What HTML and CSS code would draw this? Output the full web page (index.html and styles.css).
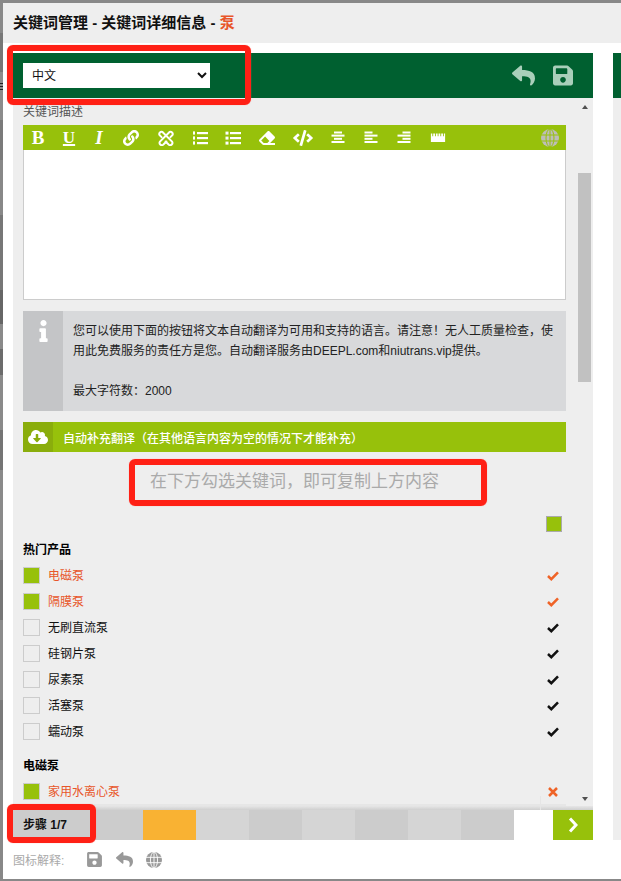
FILE: index.html
```html
<!DOCTYPE html>
<html lang="zh">
<head>
<meta charset="utf-8">
<title>关键词管理</title>
<link rel="stylesheet" href="styles.css">
</head>
<body>
<div class="dialog">
  <div class="title">关键词管理 - 关键词详细信息 - <span class="title-key">泵</span></div>
  <div class="panels">
    <section class="panel">
      <header class="head">
        <select class="lang"><option>中文</option></select>
        <div class="head-actions">
          <svg class="ic-undo" viewBox="0 0 512 512"><path d="M8.309 189.836L184.313 37.851C199.719 24.546 224 35.347 224 56.015v80.053c160.629 1.839 288 34.032 288 186.258 0 61.441-39.581 122.309-83.333 154.132-13.653 9.931-33.111-2.533-28.077-18.631 45.344-145.012-21.507-183.51-176.59-185.742V360c0 20.7-24.3 31.453-39.687 18.164l-176.004-152c-11.071-9.562-11.086-26.753 0-36.328z"/></svg>
          <svg class="ic-save" viewBox="0 0 448 512"><path d="M433.941 129.941l-83.882-83.882A48 48 0 0 0 316.118 32H48C21.49 32 0 53.49 0 80v352c0 26.51 21.49 48 48 48h352c26.51 0 48-21.49 48-48V163.882a48 48 0 0 0-14.059-33.941zM224 416c-35.346 0-64-28.654-64-64 0-35.346 28.654-64 64-64s64 28.654 64 64c0 35.346-28.654 64-64 64zm96-304.52V212c0 6.627-5.373 12-12 12H76c-6.627 0-12-5.373-12-12V108c0-6.627 5.373-12 12-12h228.52c3.183 0 6.235 1.264 8.485 3.515l3.48 3.48A11.996 11.996 0 0 1 320 111.48z"/></svg>
        </div>
      </header>
      <div class="body">
        <div class="scroll-row">
          <div class="scroll">
            <div class="field-label">关键词描述</div>
            <div class="toolbar">
              <span class="tb w14 glyph">B</span>
              <span class="tb w14 glyph under">U</span>
              <span class="tb w12 glyph ital">I</span>
              <svg class="tb w18" viewBox="0 0 512 512"><path d="M326.612 185.391c59.747 59.809 58.927 155.698.36 214.59-.11.12-.24.25-.36.37l-67.2 67.2c-59.27 59.27-155.699 59.262-214.96 0-59.27-59.26-59.27-155.7 0-214.96l37.106-37.106c9.84-9.84 26.786-3.3 27.294 10.606.648 17.722 3.826 35.527 9.69 52.721 1.986 5.822.567 12.262-3.783 16.612l-13.087 13.087c-28.026 28.026-28.905 73.66-1.155 101.96 28.024 28.579 74.086 28.749 102.325.51l67.2-67.19c28.191-28.191 28.073-73.757 0-101.83-3.701-3.694-7.429-6.564-10.341-8.569a16.037 16.037 0 0 1-6.947-12.606c-.396-10.567 3.348-21.456 11.698-29.806l21.054-21.055c5.521-5.521 14.182-6.199 20.584-1.731a152.482 152.482 0 0 1 20.522 17.197zM467.547 44.449c-59.261-59.262-155.69-59.27-214.96 0l-67.2 67.2c-.12.12-.25.25-.36.37-58.566 58.892-59.387 154.781.36 214.59a152.454 152.454 0 0 0 20.521 17.196c6.402 4.468 15.064 3.789 20.584-1.731l21.054-21.055c8.35-8.35 12.094-19.239 11.698-29.806a16.037 16.037 0 0 0-6.947-12.606c-2.912-2.005-6.64-4.875-10.341-8.569-28.073-28.073-28.191-73.639 0-101.83l67.2-67.19c28.239-28.239 74.3-28.069 102.325.51 27.75 28.3 26.872 73.934-1.155 101.96l-13.087 13.087c-4.35 4.35-5.769 10.79-3.783 16.612 5.864 17.194 9.042 34.999 9.69 52.721.509 13.906 17.454 20.446 27.294 10.606l37.106-37.106c59.271-59.259 59.271-155.699.001-214.959z"/></svg>
              <svg class="tb w18 stroke-ic" viewBox="0 0 18 18"><path d="M5 2.200 15.800 13a2.600 2.600 0 0 1-3.600 3.600L8.500 13M13 2.200 2.200 13a2.600 2.600 0 0 0 3.600 3.600L9.500 13M5 2.200A2.600 2.600 0 0 0 1.600 5.600L4 8M13 2.200a2.600 2.600 0 0 1 3.400 3.400L14 8"/></svg>
              <svg class="tb w16" viewBox="0 0 16 16"><rect x="5" y="2" width="11" height="2.200"/><rect x="5" y="7" width="11" height="2.200"/><rect x="5" y="12" width="11" height="2.200"/><rect x="1" y="1.400" width="2" height="3.200"/><rect x="1" y="6.400" width="2" height="3.200"/><rect x="1" y="11.400" width="2" height="3.200"/></svg>
              <svg class="tb w16" viewBox="0 0 16 16"><rect x="5" y="2" width="11" height="2.200"/><rect x="5" y="7" width="11" height="2.200"/><rect x="5" y="12" width="11" height="2.200"/><rect x="0.500" y="1.600" width="3" height="3"/><rect x="0.500" y="6.600" width="3" height="3"/><rect x="0.500" y="11.600" width="3" height="3"/></svg>
              <svg class="tb w18" viewBox="0 0 512 512"><path d="M497.941 273.941c18.745-18.745 18.745-49.137 0-67.882l-160-160c-18.745-18.745-49.136-18.746-67.883 0l-256 256c-18.745 18.745-18.745 49.137 0 67.882l96 96A48.004 48.004 0 0 0 144 480h356c6.627 0 12-5.373 12-12v-40c0-6.627-5.373-12-12-12H355.883l142.058-142.059zm-302.627-62.627l137.373 137.373L265.373 416H150.628l-80-80 124.686-124.686z"/></svg>
              <svg class="tb w20" viewBox="0 0 640 512"><path d="M278.9 511.5l-61-17.7c-6.4-1.8-10-8.5-8.2-14.9L346.2 8.7c1.8-6.4 8.5-10 14.9-8.2l61 17.7c6.4 1.8 10 8.5 8.2 14.9L293.8 503.3c-1.9 6.4-8.5 10.1-14.9 8.2zm-114-112.2l43.5-46.4c4.6-4.9 4.3-12.7-.8-17.2L117 256l90.6-79.7c5.1-4.5 5.5-12.3.8-17.2l-43.5-46.4c-4.5-4.8-12.1-5.1-17-.5L3.8 247.2c-5.1 4.7-5.1 12.8 0 17.5l144.1 135.1c4.9 4.6 12.5 4.4 17-.5zm327.2.6l144.1-135.1c5.1-4.7 5.1-12.8 0-17.5L492.1 112.1c-4.8-4.5-12.4-4.3-17 .5L431.6 159c-4.6 4.9-4.3 12.7.8 17.2L523 256l-90.6 79.7c-5.1 4.5-5.5 12.3-.8 17.2l43.5 46.4c4.5 4.9 12.1 5.1 17 .6z"/></svg>
              <svg class="tb w14box" viewBox="0 0 14 14"><rect x="3" y="0.500" width="8" height="2"/><rect x="0.500" y="3.600" width="13" height="2"/><rect x="3" y="6.800" width="8" height="2"/><rect x="0.500" y="10" width="13" height="2"/></svg>
              <svg class="tb w14box" viewBox="0 0 14 14"><rect x="0.500" y="0.500" width="8" height="2"/><rect x="0.500" y="3.600" width="13" height="2"/><rect x="0.500" y="6.800" width="8" height="2"/><rect x="0.500" y="10" width="13" height="2"/></svg>
              <svg class="tb w14box" viewBox="0 0 14 14"><rect x="5.500" y="0.500" width="8" height="2"/><rect x="0.500" y="3.600" width="13" height="2"/><rect x="5.500" y="6.800" width="8" height="2"/><rect x="0.500" y="10" width="13" height="2"/></svg>
              <svg class="tb w18" viewBox="0 0 18 18"><path d="M1 4h1.600v3h1V4h2v3h1V4h2v3h1V4h2v3h1V4h2v3h1V4H17v9.500H1z"/></svg>
              <svg class="tb globe-tool" viewBox="0 0 18 18"><circle class="globe-fill" cx="9" cy="9" r="9"/><g class="globe-lines"><ellipse cx="9" cy="9" rx="4" ry="9"/><path d="M0 6h18M0 12h18M9 0v18"/></g></svg>
            </div>
            <div class="editor"></div>
            <div class="info">
              <div class="info-icon">
                <svg viewBox="0 0 192 512"><path d="M20 424.229h20V279.771H20c-11.046 0-20-8.954-20-20V212c0-11.046 8.954-20 20-20h112c11.046 0 20 8.954 20 20v212.229h20c11.046 0 20 8.954 20 20V492c0 11.046-8.954 20-20 20H20c-11.046 0-20-8.954-20-20v-47.771c0-11.046 8.954-20 20-20zM96 0C56.235 0 24 32.235 24 72s32.235 72 72 72 72-32.235 72-72S135.764 0 96 0z"/></svg>
              </div>
              <p class="info-text">您可以使用下面的按钮将文本自动翻译为可用和支持的语言。请注意！无人工质量检查，使用此免费服务的责任方是您。自动翻译服务由DEEPL.com和niutrans.vip提供。<br><br>最大字符数：2000</p>
            </div>
            <div class="autofill">
              <span class="autofill-icon">
                <svg viewBox="0 0 640 512"><path d="M537.6 226.6c4.1-10.7 6.4-22.4 6.4-34.6 0-53-43-96-96-96-19.7 0-38.1 6-53.3 16.2C367 64.2 315.3 32 256 32c-88.4 0-160 71.6-160 160 0 2.7.1 5.4.2 8.1C40.2 219.8 0 273.2 0 336c0 79.5 64.5 144 144 144h368c70.7 0 128-57.3 128-128 0-61.9-44-113.6-102.4-125.4zm-132.9 88.7L299.3 420.7c-6.2 6.2-16.4 6.2-22.6 0L171.3 315.3c-10.1-10.1-2.9-27.3 11.3-27.3H248V176c0-8.8 7.2-16 16-16h48c8.8 0 16 7.2 16 16v112h65.4c14.2 0 21.4 17.2 11.3 27.3z"/></svg>
              </span>
              <span class="autofill-text">自动补充翻译（在其他语言内容为空的情况下才能补充）</span>
            </div>
            <div class="hint">在下方勾选关键词，即可复制上方内容</div>
            <div class="select-all"><span class="box-all"></span></div>

            <h3 class="group">热门产品</h3>
            <div class="rows">
              <div class="row on"><span class="box"></span><span class="name">电磁泵</span><svg class="mark" viewBox="0 0 12 10"><path d="M1 5 4.300 8.200 11 1.300"/></svg></div>
              <div class="row on"><span class="box"></span><span class="name">隔膜泵</span><svg class="mark" viewBox="0 0 12 10"><path d="M1 5 4.300 8.200 11 1.300"/></svg></div>
              <div class="row"><span class="box"></span><span class="name">无刷直流泵</span><svg class="mark" viewBox="0 0 12 10"><path d="M1 5 4.300 8.200 11 1.300"/></svg></div>
              <div class="row"><span class="box"></span><span class="name">硅钢片泵</span><svg class="mark" viewBox="0 0 12 10"><path d="M1 5 4.300 8.200 11 1.300"/></svg></div>
              <div class="row"><span class="box"></span><span class="name">尿素泵</span><svg class="mark" viewBox="0 0 12 10"><path d="M1 5 4.300 8.200 11 1.300"/></svg></div>
              <div class="row"><span class="box"></span><span class="name">活塞泵</span><svg class="mark" viewBox="0 0 12 10"><path d="M1 5 4.300 8.200 11 1.300"/></svg></div>
              <div class="row"><span class="box"></span><span class="name">蠕动泵</span><svg class="mark" viewBox="0 0 12 10"><path d="M1 5 4.300 8.200 11 1.300"/></svg></div>
            </div>
            <h3 class="group group-next">电磁泵</h3>
            <div class="rows">
              <div class="row on"><span class="box"></span><span class="name">家用水离心泵</span><svg class="mark cross" viewBox="0 0 12 10"><path d="M2 1 10 9M10 1 2 9"/></svg></div>
            </div>
          </div>
          <div class="scrollbar">
            <span class="arrow-up"></span>
            <span class="thumb"></span>
            <span class="arrow-down"></span>
          </div>
        </div>
        <div class="body-foot"></div>
      </div>
      <div class="steps">
        <div class="step-label">步骤 1/7</div>
        <div class="step dark"></div>
        <div class="step current"></div>
        <div class="step light"></div>
        <div class="step dark"></div>
        <div class="step light"></div>
        <div class="step dark"></div>
        <div class="step light"></div>
        <div class="step dark"></div>
        <div class="step-gap"></div>
        <div class="step-next">
          <svg viewBox="0 0 10 16"><path d="M2 1.500 8 8 2 14.500"/></svg>
        </div>
      </div>
    </section>
    <section class="panel-next">
      <div class="head-next"></div>
      <div class="body-next"></div>
    </section>
  </div>
  <footer class="legend">
    <span class="legend-label">图标解释:</span>
    <svg class="lg-save" viewBox="0 0 448 512"><path d="M433.941 129.941l-83.882-83.882A48 48 0 0 0 316.118 32H48C21.49 32 0 53.49 0 80v352c0 26.51 21.49 48 48 48h352c26.51 0 48-21.49 48-48V163.882a48 48 0 0 0-14.059-33.941zM224 416c-35.346 0-64-28.654-64-64 0-35.346 28.654-64 64-64s64 28.654 64 64c0 35.346-28.654 64-64 64zm96-304.52V212c0 6.627-5.373 12-12 12H76c-6.627 0-12-5.373-12-12V108c0-6.627 5.373-12 12-12h228.52c3.183 0 6.235 1.264 8.485 3.515l3.48 3.48A11.996 11.996 0 0 1 320 111.48z"/></svg>
    <svg class="lg-undo" viewBox="0 0 512 512"><path d="M8.309 189.836L184.313 37.851C199.719 24.546 224 35.347 224 56.015v80.053c160.629 1.839 288 34.032 288 186.258 0 61.441-39.581 122.309-83.333 154.132-13.653 9.931-33.111-2.533-28.077-18.631 45.344-145.012-21.507-183.51-176.59-185.742V360c0 20.7-24.3 31.453-39.687 18.164l-176.004-152c-11.071-9.562-11.086-26.753 0-36.328z"/></svg>
    <svg class="lg-globe" viewBox="0 0 18 18"><circle class="lg-globe-fill" cx="9" cy="9" r="9"/><g class="lg-globe-lines"><ellipse cx="9" cy="9" rx="4" ry="9"/><path d="M0 6h18M0 12h18M9 0v18"/></g></svg>
  </footer>
</div>
<div class="back-marks"></div>
<div class="note note-lang"></div>
<div class="note note-hint"></div>
<div class="note note-step"></div>
<div class="tip-edge"></div>
</body>
</html>
```
FILE: styles.css
```css
* { box-sizing: border-box; }
html, body { margin: 0; height: 881px; overflow: hidden; }
body {
  position: relative;
  padding: 3px 0 0 3px;
  font-family: "Liberation Sans", "Noto Sans CJK SC", sans-serif;
  font-size: 12px;
  color: #111;
  background: linear-gradient(#888 0 33px, #777 33px 72px, #8c8c8c 72px 120px, #7a7a7a 120px 160px, #888 160px 215px, #777 215px 290px, #666 290px 324px, #8a8a8a 324px 349px, #6c6c6c 349px 375px, #8a8a8a 375px 430px, #757575 430px 470px, #8a8a8a 470px 560px, #777 560px 620px, #8c8c8c 620px 700px, #7a7a7a 700px 760px, #888 760px);
}
.dialog {
  display: flex;
  flex-direction: column;
  width: 618px;
  height: 877px;
  background: #fff;
  overflow: hidden;
}
.title {
  height: 40px;
  padding-left: 10px;
  background: #eee;
  font-size: 15px;
  font-weight: 700;
  line-height: 40px;
  color: #111;
}
.title-key { color: #e8562a; }
.panels {
  display: flex;
  gap: 20px;
  padding: 10px 0 0 10px;
  height: 797px;
}
.panel {
  display: flex;
  flex-direction: column;
  flex: 0 0 580px;
}
.head {
  display: flex;
  align-items: center;
  justify-content: space-between;
  height: 45px;
  padding: 0 20px 0 10px;
  background: #006030;
}
.lang {
  width: 187px;
  height: 25px;
  border: 0;
  border-radius: 0;
  background-color: #fff;
  padding-left: 5px;
  font: 12px "Liberation Sans", "Noto Sans CJK SC", sans-serif;
  color: #111;
}
.head-actions { display: flex; align-items: center; gap: 18px; }
.ic-undo { width: 23px; height: 23px; fill: #a9cfba; }
.ic-save { width: 20px; height: 23px; fill: #a9cfba; }

.body { display: flex; flex-direction: column; height: 712px; background: #eee; }
.scroll-row { display: flex; height: 706px; }
.scroll { flex: 1; min-width: 0; padding: 7px 12px 0 10px; overflow: hidden; }
.field-label { height: 14px; line-height: 14px; color: #555; }

.toolbar {
  display: flex;
  align-items: center;
  gap: 17px;
  height: 25px;
  margin-top: 6px;
  padding: 0 7px 0 8px;
  background: #97c10b;
}
.tb { flex: none; fill: #fff; height: 16px; }
.w12 { width: 12px; }
.w14 { width: 14px; }
.w16 { width: 16px; }
.w18 { width: 18px; }
.w20 { width: 20px; }
.w14box { width: 16px; height: 14px; padding: 0 1px; }
.glyph {
  display: flex;
  justify-content: center;
  align-items: center;
  color: #fff;
  font: 700 19px/16px "Liberation Serif", serif;
}
.under {
  font-size: 17px;
  text-decoration: underline;
  text-decoration-thickness: 2px;
  text-underline-offset: 1px;
}
.ital { font-style: italic; }
.stroke-ic { fill: none; stroke: #fff; stroke-width: 2.200; stroke-linecap: round; }
.globe-tool { width: 18px; height: 18px; margin-left: auto; }
.globe-fill { fill: #bdbdb8; }
.globe-lines { fill: none; stroke: #97c10b; stroke-width: 1; }

.editor {
  height: 150px;
  background: #fff;
  border: 1px solid #ccc;
  border-top: 0;
}
.info {
  display: flex;
  height: 100px;
  margin-top: 11px;
  background: #d8d9db;
}
.info-icon {
  flex: 0 0 40px;
  display: flex;
  justify-content: center;
  padding-top: 9px;
  background: #c4c5c7;
}
.info-icon svg { width: 9px; height: 22px; fill: #fff; }
.info-text { margin: 0; padding: 10px 13px 0 10px; line-height: 20px; color: #222; }
.autofill {
  display: flex;
  align-items: center;
  height: 30px;
  margin-top: 11px;
  background: #97c10b;
  color: #fff;
  font-weight: 500;
}
.autofill-icon {
  flex: 0 0 30px;
  display: flex;
  align-items: center;
  justify-content: center;
  height: 30px;
  background: #8aad0c;
}
.autofill-icon svg { width: 20px; height: 16px; fill: #fff; }
.autofill-text { padding-left: 10px; }
.hint {
  margin-top: 15px;
  height: 30px;
  line-height: 30px;
  text-align: center;
  font-size: 17px;
  color: #aaa;
}
.select-all { display: flex; justify-content: flex-end; margin-top: 19px; padding-right: 4px; }
.box-all { width: 16px; height: 16px; background: #97c10b; border: 1px solid #aaa; }
.group { height: 16px; margin: 10px 0 9px; font-size: 12px; line-height: 16px; font-weight: 700; color: #000; }
.group-next { margin-top: 18px; }
.rows { display: flex; flex-direction: column; gap: 9px; }
.row { display: flex; align-items: center; gap: 8px; height: 17px; padding-right: 7px; color: #111; }
.box { width: 17px; height: 17px; border: 1px solid #ccc; background: #eee; }
.name { padding-bottom: 2px; }
.row.on .box { background: #97c10b; }
.row.on .name { color: #e8562a; }
.mark { width: 12px; height: 10px; margin-left: auto; fill: none; stroke: #111; stroke-width: 2.500; }
.row.on .mark { stroke: #ef6327; }

.scrollbar { display: flex; flex-direction: column; flex: 0 0 15px; padding: 7px 2px 3px 0; align-items: center; }
.arrow-up { border: solid transparent; border-width: 0 3.500px 4px; border-bottom-color: #505050; }
.thumb { width: 13px; height: 209px; margin-top: 64px; background: #c1c1c1; }
.arrow-down { border: solid transparent; border-width: 4px 3.500px 0; border-top-color: #505050; margin-top: auto; }
.body-foot {
  height: 6px;
  background:
    linear-gradient(#e6e6e6, #e6e6e6) 0 0 / 553px 2px no-repeat,
    linear-gradient(#eeeeee 0 2px, #e6e6e6 2px, #cfcfcf);
}

.steps { display: flex; height: 30px; }
.step-label { flex: 0 0 77px; padding-left: 10px; background: #ccc; font-weight: 700; line-height: 30px; color: #111; }
.step { flex: 0 0 53px; }
.dark { background: #ccc; }
.light { background: #d5d5d5; }
.current { background: #f9b233; }
.step-gap { flex: 1; background: #fff; }
.step-next { display: flex; align-items: center; justify-content: center; flex: 0 0 40px; background: #97c10b; }
.step-next svg { width: 10px; height: 16px; fill: none; stroke: #fff; stroke-width: 3; }

.panel-next { display: flex; flex-direction: column; flex: 1; height: 787px; }
.head-next { height: 45px; background: #006030; }
.body-next { height: 742px; background: #eee; }

.legend {
  display: flex;
  align-items: center;
  height: 40px;
  padding-left: 10px;
  border-bottom: 1px solid #888;
  color: #aaa;
}
.legend-label { flex: 0 0 74px; }
.lg-save { width: 15px; height: 17px; fill: #999; }
.lg-undo { width: 17px; height: 17px; margin-left: 14px; fill: #999; }
.lg-globe { width: 16px; height: 16px; margin-left: 13px; }
.lg-globe-fill { fill: #999; }
.lg-globe-lines { fill: none; stroke: #fff; stroke-width: 1; }

.back-marks {
  position: absolute;
  left: 0;
  top: 83px;
  width: 3px;
  height: 9px;
  background: repeating-linear-gradient(#222 0 1px, transparent 1px 3px);
}
.note {
  position: absolute;
  border: 6px solid #ff2015;
  border-radius: 6px;
  box-shadow: 0 0 1px #ff8a80;
}
.note-lang { left: 7px; top: 45px; width: 244px; height: 60px; }
.note-hint { left: 129px; top: 459px; width: 358px; height: 47px; }
.note-step { left: 7px; top: 804px; width: 89px; height: 39px; }
.tip-edge { position: absolute; left: 540px; top: 796px; width: 1px; height: 14px; background: #e6e6e6; }
```
